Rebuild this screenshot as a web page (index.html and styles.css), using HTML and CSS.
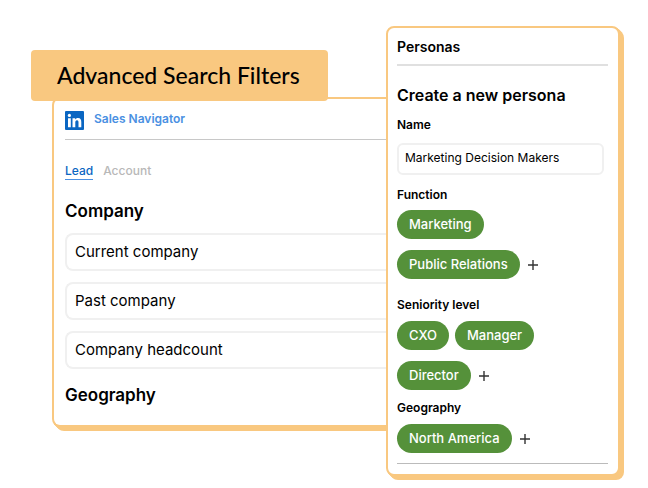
FILE: index.html
```html
<!DOCTYPE html>
<html lang="en">
<head>
  <meta charset="UTF-8" />
  <meta name="viewport" content="width=device-width, initial-scale=1.0"/>
  <title>Advanced Search Filters</title>
  <link rel="stylesheet" href="styles.css">
</head>
<body>
  <main class="board">
    <section class="card search-card">
      <h1 class="banner">Advanced Search Filters</h1>

      <header class="brand">
        <svg class="logo" viewBox="0 0 19 19" aria-hidden="true">
          <rect width="19" height="19" rx="1" fill="#0a66c2"/>
          <circle cx="4.4" cy="4.4" r="1.6" fill="#fff"/>
          <path fill="#fff" d="M3 7.2h2.8v9H3zM7.5 7.2h2.7v1.3c.5-.9 1.5-1.5 2.8-1.5 2.7 0 3.3 1.8 3.3 4.2v5h-2.8v-4.5c0-1.2-.1-2.4-1.5-2.4s-1.7 1.1-1.7 2.3v4.600H7.5z"/>
        </svg>
        <a class="brand-link" href="#">Sales Navigator</a>
      </header>

      <nav class="tabs">
        <a class="tab active" href="#">Lead</a>
        <a class="tab" href="#">Account</a>
      </nav>

      <h2 class="section-title">Company</h2>
      <div class="filters">
        <button type="button" class="filter">Current company</button>
        <button type="button" class="filter">Past company</button>
        <button type="button" class="filter">Company headcount</button>
      </div>
      <h2 class="section-title">Geography</h2>
    </section>

    <section class="card persona-card">
      <h2 class="persona-heading">Personas</h2>
      <h3 class="section-title">Create a new persona</h3>

      <label class="label" for="persona-name">Name</label>
      <input class="name-input" id="persona-name" type="text" value="Marketing Decision Makers">

      <h4 class="label">Function</h4>
      <div class="chips function-chips">
        <div class="chip-row">
          <span class="chip">Marketing</span>
        </div>
        <div class="chip-row">
          <span class="chip">Public Relations</span>
          <button type="button" class="add" aria-label="Add function">
            <svg viewBox="0 0 10 10"><path d="M5 0v10M0 5h10"/></svg>
          </button>
        </div>
      </div>

      <h4 class="label">Seniority level</h4>
      <div class="chips">
        <div class="chip-row">
          <span class="chip">CXO</span>
          <span class="chip">Manager</span>
        </div>
        <div class="chip-row">
          <span class="chip">Director</span>
          <button type="button" class="add" aria-label="Add seniority level">
            <svg viewBox="0 0 10 10"><path d="M5 0v10M0 5h10"/></svg>
          </button>
        </div>
      </div>

      <h4 class="label">Geography</h4>
      <div class="chips">
        <div class="chip-row">
          <span class="chip">North America</span>
          <button type="button" class="add" aria-label="Add geography">
            <svg viewBox="0 0 10 10"><path d="M5 0v10M0 5h10"/></svg>
          </button>
        </div>
      </div>
      <hr class="divider">
    </section>
  </main>
</body>
</html>
```

FILE: styles.css
```css
* {
  box-sizing: border-box;
}
body {
  margin: 0;
  background: #fff;
  color: #000;
  font-family: Inter, "Liberation Sans", sans-serif;
}
h1, h2, h3, h4 {
  margin: 0;
}
button, input {
  font-family: inherit;
  color: inherit;
}
.board {
  display: grid;
  grid-template-columns: 1fr 234px;
  align-items: start;
  padding: 26px 28px 8px 52px;
}
.card {
  background: #fff;
  border: 2px solid #f9c880;
  border-radius: 8px;
  box-shadow: 1px 1px #f9c880, 2px 2px #f9c880, 3px 3px #f9c880, 4px 4px #f9c880;
}

/* search filters */
.search-card {
  position: relative;
  margin-top: 71px;
  border-right: none;
  border-radius: 8px 0 0 8px;
  padding: 12px 0 18px 11px;
}
.banner {
  position: absolute;
  top: -49px;
  left: -23px;
  padding: 10px 28px 10px 26px;
  border-radius: 4px;
  background: #f9c880;
  font-family: Lato, sans-serif;
  font-size: 23px;
  font-weight: 500;
  line-height: 31px;
  white-space: nowrap;
}
.brand {
  display: flex;
  gap: 10px;
  padding-bottom: 9px;
  border-bottom: 1px solid #c8c8c8;
}
.logo {
  width: 19px;
  height: 19px;
}
.brand-link {
  color: #4a90e2;
  font-size: 12px;
  font-weight: 600;
  line-height: 16px;
  text-decoration: none;
}
.tabs {
  display: flex;
  gap: 10px;
  margin: 23px 0 19px;
}
.tab {
  color: #b8b8b8;
  font-size: 12px;
  font-weight: 500;
  line-height: 16px;
  text-decoration: none;
  border-bottom: 1px solid transparent;
}
.tab.active {
  color: #0a66c2;
  border-color: #4a90e2;
}
.section-title {
  font-size: 17px;
  font-weight: 600;
  line-height: 24px;
}
.filters {
  display: grid;
  gap: 11px;
  margin: 10px 0 14px;
}
.filter {
  height: 38px;
  padding: 0 8px 2px;
  border: 2px solid #f0f0f0;
  border-right: none;
  border-radius: 8px 0 0 8px;
  background: #fff;
  font-size: 15px;
  text-align: left;
}

/* persona form */
.persona-card {
  position: relative;
  padding: 9px 10px 10px 9px;
}
.persona-heading {
  padding-bottom: 7px;
  margin-bottom: 17px;
  border-bottom: 2px solid #e0e0e0;
  font-size: 14px;
  font-weight: 600;
  line-height: 20px;
}
.label {
  display: block;
  font-size: 12px;
  font-weight: 600;
  line-height: 16px;
}
.persona-card .section-title {
  margin-bottom: 10px;
  font-size: 16px;
}
.name-input {
  display: block;
  width: calc(100% - 4px);
  height: 32px;
  margin: 10px 0 12px;
  padding: 0 6px 3px;
  border: 2px solid #f0f0f0;
  border-radius: 6px;
  background: #fff;
  font-size: 12px;
}
.chips {
  display: grid;
  gap: 11px;
  margin: 8px 0 10px;
}
.function-chips {
  margin: 7px 0 18px;
}
.chip-row {
  display: flex;
  align-items: center;
  gap: 6px;
}
.chip {
  padding: 0 12px;
  border-radius: 15px;
  background: #55913a;
  color: #fff;
  font-size: 13px;
  font-weight: 500;
  line-height: 29px;
}
.add {
  display: flex;
  padding: 2px;
  border: none;
  background: none;
  cursor: pointer;
}
.add svg {
  width: 10px;
  height: 10px;
  fill: none;
  stroke: #333;
  stroke-width: 1.4;
}
.divider {
  height: 1px;
  margin: 0;
  border: none;
  background: #bbb;
}
```
